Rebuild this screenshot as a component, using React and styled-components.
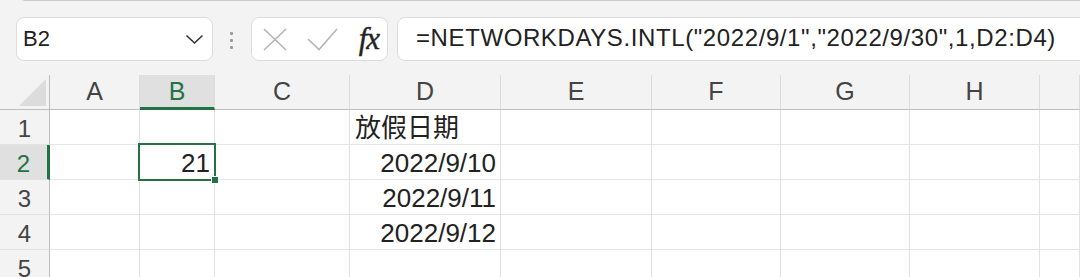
import React from 'react';
import styled, { createGlobalStyle } from 'styled-components';

const GREEN = '#217346';

const GlobalStyle = createGlobalStyle`
  html, body {
    margin: 0;
    padding: 0;
    background: #f3f3f3;
    overflow: hidden;
  }
  body {
    font-family: "Liberation Sans", "Noto Sans CJK SC", sans-serif;
    color: #222;
  }
`;

const Page = styled.div`
  width: 1080px;
  height: 277px;
  overflow: hidden;
  background: #f3f3f3;
`;

/* bottom edge of the ribbon that sits above the formula bar */
const RibbonEdge = styled.div`
  height: 4px;
  margin-top: -4px;
  margin-left: 20px;
  border-left: 1px solid #cdcdcd;
  border-bottom: 1px solid #cdcdcd;
  border-bottom-left-radius: 7px;
`;

const Toolbar = styled.div`
  display: flex;
  align-items: center;
  padding: 16px 0 0 16px;
  height: 44px;
`;

const Box = styled.div`
  box-sizing: border-box;
  height: 44px;
  background: #fff;
  border: 1px solid #dcdcdc;
  border-radius: 8px;
  display: flex;
  align-items: center;
`;

const NameBox = styled(Box)`
  width: 197px;
  padding: 0 8px 0 6px;
  justify-content: space-between;
  font-size: 22px;
  color: #222;
`;

const Grip = styled.div`
  display: flex;
  flex-direction: column;
  gap: 4px;
  margin: 2px 18px 0 17px;

  span {
    width: 3px;
    height: 3px;
    background: #9a9a9a;
    border-radius: 1px;
  }
`;

const FxBox = styled(Box)`
  width: 137px;
  padding: 0 8px 0 11px;
  justify-content: space-between;
`;

const FxLabel = styled.span`
  font-family: "Liberation Serif", "DejaVu Serif", serif;
  font-style: italic;
  font-size: 31px;
  color: #222;
  line-height: 1;
  margin-top: -2px;
  letter-spacing: -1px;
  -webkit-text-stroke: 0.4px #222;
`;

const FormulaBox = styled(Box)`
  flex: 1;
  margin-left: 9px;
  margin-right: -20px;
  padding: 0 0 2px 18px;
  font-size: 24px;
  letter-spacing: 0.6px;
  color: #222;
  white-space: nowrap;
`;

const Sheet = styled.div`
  margin-top: 14px;
  display: grid;
  grid-template-columns: 50px 90px 75px 135px 151px 151px 129px 129px 130px 1fr;
  grid-template-rows: repeat(6, 35px);
`;

const ColHead = styled.div`
  box-sizing: border-box;
  display: flex;
  align-items: flex-end;
  justify-content: center;
  background: ${p => (p.$active ? '#e0e0e0' : '#f3f3f3')};
  color: ${p => (p.$active ? GREEN : '#444')};
  font-size: 25px;
  border-right: 1px solid #dcdcdc;
  border-bottom: ${p => (p.$active ? `3px solid ${GREEN}` : '1px solid #bdbdbd')};
  padding-bottom: ${p => (p.$active ? '1px' : '3px')};
`;

const Corner = styled.div`
  box-sizing: border-box;
  display: flex;
  align-items: flex-end;
  justify-content: flex-end;
  padding: 0 3px 3px 0;
  background: #f3f3f3;
  border-right: 1px solid #bdbdbd;
  border-bottom: 1px solid #bdbdbd;

  &::after {
    content: '';
    width: 27px;
    height: 27px;
    background: #dcdcdc;
    clip-path: polygon(100% 0, 100% 100%, 0 100%);
  }
`;

const RowHead = styled.div`
  box-sizing: border-box;
  display: flex;
  align-items: flex-end;
  justify-content: center;
  padding-bottom: 1px;
  background: ${p => (p.$active ? '#e0e0e0' : '#f3f3f3')};
  color: ${p => (p.$active ? GREEN : '#444')};
  font-size: 24px;
  border-bottom: 1px solid #e2e2e2;
  border-right: ${p => (p.$active ? `3px solid ${GREEN}` : '1px solid #bdbdbd')};
`;

const Cell = styled.div`
  box-sizing: border-box;
  position: relative;
  display: flex;
  align-items: flex-end;
  justify-content: ${p => (p.$right ? 'flex-end' : 'flex-start')};
  padding: 0 4px 0 5px;
  background: #fff;
  font-size: 26px;
  color: #222;
  white-space: nowrap;
  border-right: 1px solid #e1e1e1;
  border-bottom: 1px solid #e6e6e6;
`;

const Selection = styled.div`
  position: absolute;
  z-index: 2;
  top: -2px;
  left: -2px;
  right: -2px;
  bottom: -2px;
  border: 2px solid ${GREEN};
  pointer-events: none;

  &::after {
    content: '';
    position: absolute;
    right: -5px;
    bottom: -5px;
    width: 6px;
    height: 6px;
    background: ${GREEN};
    border: 1px solid #fff;
  }
`;

const columns = ['A', 'B', 'C', 'D', 'E', 'F', 'G', 'H', ''];

const data = {
  '1-D': { text: '放假日期' },
  '2-B': { text: '21', right: true },
  '2-D': { text: '2022/9/10', right: true },
  '3-D': { text: '2022/9/11', right: true },
  '4-D': { text: '2022/9/12', right: true },
};

const Chevron = () => (
  <svg width="19" height="11" viewBox="0 0 19 11">
    <path d="M1.5 1.5 L9.5 9 L17.5 1.5" fill="none" stroke="#333" strokeWidth="1.6" />
  </svg>
);

const Cancel = () => (
  <svg width="24" height="23" viewBox="0 0 24 23">
    <path d="M1 1 L23 22 M23 1 L1 22" fill="none" stroke="#b4b4b4" strokeWidth="1.6" />
  </svg>
);

const Enter = () => (
  <svg width="31" height="23" viewBox="0 0 31 23">
    <path d="M1 11 L12 21.5 L30 1" fill="none" stroke="#b4b4b4" strokeWidth="1.6" />
  </svg>
);

export default function App() {
  const activeCol = 'B';
  const activeRow = 2;

  return (
    <Page>
      <GlobalStyle />
      <RibbonEdge />
      <Toolbar>
        <NameBox>
          <span>B2</span>
          <Chevron />
        </NameBox>
        <Grip>
          <span />
          <span />
          <span />
        </Grip>
        <FxBox>
          <Cancel />
          <Enter />
          <FxLabel>fx</FxLabel>
        </FxBox>
        <FormulaBox>=NETWORKDAYS.INTL("2022/9/1","2022/9/30",1,D2:D4)</FormulaBox>
      </Toolbar>

      <Sheet>
        <Corner />
        {columns.map((c, i) => (
          <ColHead key={i} $active={c === activeCol}>{c}</ColHead>
        ))}
        {[1, 2, 3, 4, 5].map(r => (
          <React.Fragment key={r}>
            <RowHead $active={r === activeRow}>{r}</RowHead>
            {columns.map((c, i) => {
              const d = data[`${r}-${c}`];
              const selected = r === activeRow && c === activeCol;
              return (
                <Cell key={i} $right={d && d.right}>
                  {d ? d.text : null}
                  {selected && <Selection />}
                </Cell>
              );
            })}
          </React.Fragment>
        ))}
      </Sheet>
    </Page>
  );
}
